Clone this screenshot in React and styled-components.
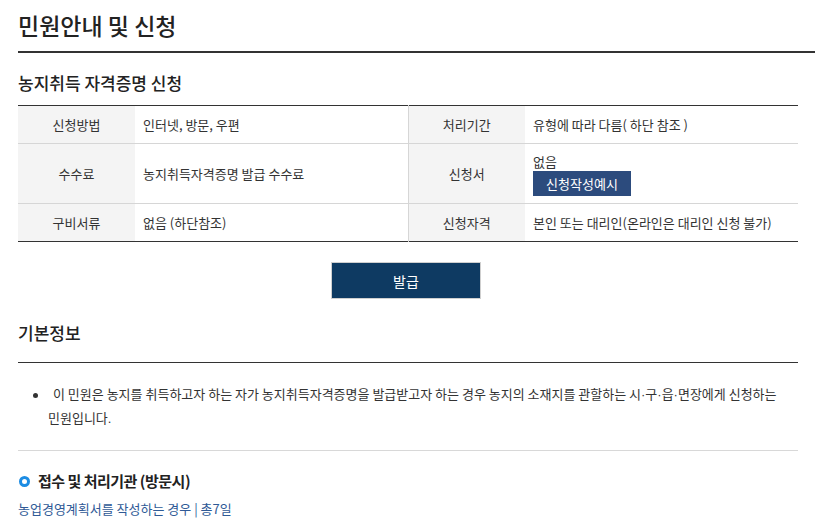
import React from "react";
import styled, { createGlobalStyle } from "styled-components";

const GlobalStyle = createGlobalStyle`
  html, body { margin: 0; padding: 0; background: #fff; }
  body {
    font-family: "Noto Sans CJK KR", "Noto Sans", sans-serif;
    color: #333;
    font-size: 13px;
    letter-spacing: 0;
    word-break: keep-all;
  }
  * { box-sizing: border-box; }
`;

const Page = styled.div`
  padding-left: 18px;
  overflow: hidden;
`;

const PageHeader = styled.header`
  border-bottom: 2px solid #333;
  padding: 8px 0 9px;
`;

const PageTitle = styled.h1`
  margin: 0;
  font-size: 23px;
  line-height: 34px;
  font-weight: 500;
  color: #222;
`;

const Content = styled.div`
  width: 780px;
`;

const SectionTitle = styled.h2`
  margin: ${(p) => p.$mt || 18}px 0 0;
  font-size: 17px;
  line-height: 24px;
  font-weight: 500;
  color: #222;
  padding-bottom: ${(p) => (p.$ruled ? 17 : 10)}px;
  border-bottom: ${(p) => (p.$ruled ? "1px solid #333" : "none")};
`;

const InfoTable = styled.table`
  width: 100%;
  border-collapse: collapse;
  table-layout: fixed;
  border-top: 1px solid #333;
  border-bottom: 1px solid #333;
`;

const Row = styled.tr`
  & + & > * { border-top: 1px solid #d6d6d6; }
`;

const HeadCell = styled.th`
  width: 117px;
  background: #f4f4f4;
  font-weight: 400;
  color: #333;
  text-align: center;
  vertical-align: middle;
  padding: 9px 8px;
  line-height: 19px;
  border-left: ${(p) => (p.$divider ? "1px solid #d6d6d6" : "none")};
`;

const DataCell = styled.td`
  width: 273px;
  padding: ${(p) => (p.$stack ? "9px 8px 7px" : "9px 8px")};
  line-height: 19px;
  vertical-align: middle;
  color: #333;
`;

const StackText = styled.div`
  line-height: 18px;
`;

const SmallButton = styled.button`
  display: block;
  width: 98px;
  height: 25px;
  border: 0;
  padding: 0;
  background: #2c4b7d;
  color: #fff;
  font-family: inherit;
  font-size: 13px;
  cursor: pointer;
`;

const ButtonRow = styled.div`
  display: flex;
  justify-content: center;
  margin-top: 20px;
`;

const IssueButton = styled.button`
  width: 150px;
  height: 37px;
  margin-left: -4px;
  border: 1px solid #cfcfcf;
  background: #0e3a62;
  color: #fff;
  font-family: inherit;
  font-size: 14px;
  cursor: pointer;
`;

const BulletList = styled.ul`
  list-style: none;
  margin: 20px 0 0;
  padding: 0 0 19px;
  border-bottom: 1px solid #d8d8d8;
`;

const BulletItem = styled.li`
  position: relative;
  padding-left: 30px;
  font-family: "Liberation Sans", "Noto Sans CJK KR", sans-serif;
  word-spacing: -0.7px;
  word-break: keep-all;
  line-height: 24px;
  text-indent: 5px;
  color: #333;
  &::before {
    content: "";
    position: absolute;
    left: 15px;
    top: 10px;
    width: 5px;
    height: 5px;
    border-radius: 50%;
    background: #333;
  }
`;

const SubHeading = styled.h3`
  display: flex;
  align-items: center;
  gap: 8px;
  margin: 18px 0 0;
  font-size: 15px;
  line-height: 24px;
  font-weight: 700;
  letter-spacing: -0.5px;
  color: #222;
`;

const RingIcon = styled.span`
  display: inline-block;
  width: 11px;
  height: 11px;
  margin-left: 1px;
  border-radius: 50%;
  border: 3px solid #1c8ce3;
`;

const NoteText = styled.p`
  margin: 6px 0 0;
  line-height: 20px;
  color: #2f5a96;
`;

const rows = [
  [
    { h: "신청방법", d: "인터넷, 방문, 우편" },
    { h: "처리기간", d: "유형에 따라 다름( 하단 참조 )" },
  ],
  [
    { h: "수수료", d: "농지취득자격증명 발급 수수료" },
    { h: "신청서", d: "없음", button: "신청작성예시" },
  ],
  [
    { h: "구비서류", d: "없음 (하단참조)" },
    { h: "신청자격", d: "본인 또는 대리인(온라인은 대리인 신청 불가)" },
  ],
];

export default function App() {
  return (
    <>
      <GlobalStyle />
      <Page>
        <PageHeader>
          <PageTitle>민원안내 및 신청</PageTitle>
        </PageHeader>
        <Content>
          <SectionTitle>농지취득 자격증명 신청</SectionTitle>
          <InfoTable>
            <tbody>
              {rows.map((row, i) => (
                <Row key={i}>
                  {row.map((c, j) => (
                    <React.Fragment key={j}>
                      <HeadCell $divider={j === 1}>{c.h}</HeadCell>
                      {c.button ? (
                        <DataCell $stack>
                          <StackText>{c.d}</StackText>
                          <SmallButton>{c.button}</SmallButton>
                        </DataCell>
                      ) : (
                        <DataCell>{c.d}</DataCell>
                      )}
                    </React.Fragment>
                  ))}
                </Row>
              ))}
            </tbody>
          </InfoTable>
          <ButtonRow>
            <IssueButton>발급</IssueButton>
          </ButtonRow>
          <SectionTitle $ruled $mt={22}>기본정보</SectionTitle>
          <BulletList>
            <BulletItem>
              {"이 민원은 농지를 취득하고자 하는 자가 농지취득자격증명을 발급받고자 하는 경우 농지의 소재지를 관할하는 시·구·읍·면장에게 신청하는 민원입니다."}
            </BulletItem>
          </BulletList>
          <SubHeading>
            <RingIcon />
            접수 및 처리기관 (방문시)
          </SubHeading>
          <NoteText>농업경영계획서를 작성하는 경우 | 총7일</NoteText>
        </Content>
      </Page>
    </>
  );
}
